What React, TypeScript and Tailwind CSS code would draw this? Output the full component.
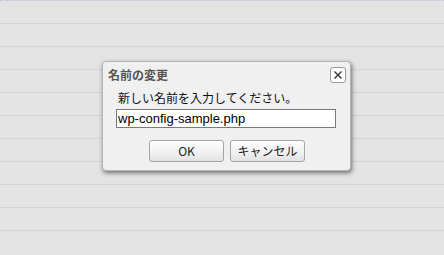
import React from "react";

const rows = Array.from({ length: 10 });

const App = () => {
  return (
    <div className="relative w-[444px] h-[255px] overflow-hidden bg-[#e3e3e3] font-['Noto_Sans_CJK_JP',sans-serif]">
      <div className="flex flex-col">
        <div className="h-[23px] border-t border-dotted border-[#b8bfd6]" />
        {rows.map((_, i) => (
          <div key={i} className="h-[23px] border-t border-[#d4d4d4]" />
        ))}
      </div>

      {/* rename dialog */}
      <div className="absolute left-[102px] top-[61px] w-[249px] h-[110px] rounded-[4px] border border-[#b5b5b5] bg-[#f0f0f0] shadow-[1px_2px_4px_rgba(0,0,0,0.5)]">
        <div className="flex items-center justify-between h-[24px] pl-[5px] pr-[4px] pt-[1px]">
          <span className="text-[12px] font-bold text-[#555] leading-none">名前の変更</span>
          <button className="w-[16px] h-[16px] rounded-[3px] border border-[#9a9a9a] bg-white flex items-center justify-center">
            <svg width="10" height="10" viewBox="0 0 10 10">
              <path d="M1.5 1.5 L8.5 8.5 M8.5 1.5 L1.5 8.5" stroke="#333" strokeWidth="1.4" />
            </svg>
          </button>
        </div>
        <div className="px-[13px] pt-[4px]">
          <p className="pl-[2px] text-[12px] text-[#111] leading-[16px]">新しい名前を入力してください。</p>
          <div className="mt-[3px] h-[19px] w-[220px] border border-[#7a7a7a] bg-white flex items-center px-[1px]">
            <span className="text-[13px] text-black leading-none font-['Liberation_Sans',sans-serif]">wp-config-sample.php</span>
          </div>
          <div className="flex justify-center gap-[6px] mt-[12px] -mr-[1px]">
            <button className="w-[75px] h-[22px] rounded-[3px] border border-[#a5a5a5] bg-[linear-gradient(#fefefe,#f0f0f0_60%,#e2e2e2)] text-[12px] text-[#222]">
              OK
            </button>
            <button className="w-[75px] h-[22px] rounded-[3px] border border-[#a5a5a5] bg-[linear-gradient(#fefefe,#f0f0f0_60%,#e2e2e2)] text-[12px] text-[#222]">
              キャンセル
            </button>
          </div>
        </div>
      </div>
    </div>
  );
};

export default App;
